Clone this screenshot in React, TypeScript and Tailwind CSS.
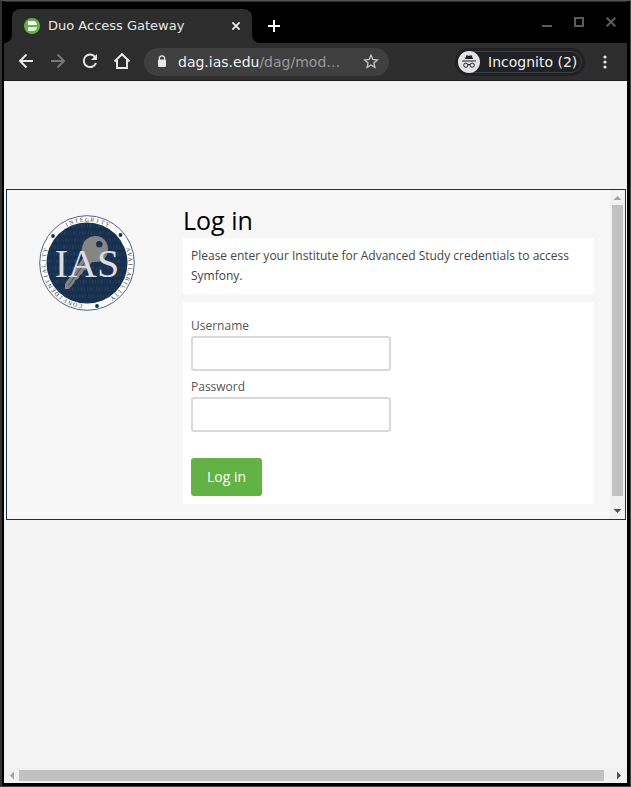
import type { ReactNode } from "react";

function ToolButton({ label, children, className = "" }: { label: string; children: ReactNode; className?: string }) {
  return (
    <button type="button" aria-label={label} className={`flex h-6 w-6 shrink-0 items-center justify-center ${className}`}>
      {children}
    </button>
  );
}

function DuoIcon() {
  return (
    <svg width="16" height="16" viewBox="0 0 16 16" className="shrink-0" aria-hidden="true">
      <circle cx="8" cy="8" r="8" fill="#63b245" />
      <path d="M4 3h5c2.300 0 3.800 1.500 4.100 4H4z" fill="#fff" />
      <path d="M4 9h9.100c-.3 2.500-1.800 4-4.100 4H4z" fill="#e2f1dc" />
    </svg>
  );
}

function TitleBar() {
  return (
    <header className="flex h-[41px] shrink-0 items-start bg-black pt-[7px] text-white">
      <div className="relative ml-2 flex h-[34px] w-[240px] shrink-0 items-center rounded-t-lg bg-[#2d2d2d] pr-1 pl-3">
        <svg className="absolute bottom-0 -left-2" width="8" height="8" viewBox="0 0 8 8" aria-hidden="true">
          <path d="M8 0v8H0a8 8 0 0 0 8-8z" fill="#2d2d2d" />
        </svg>
        <svg className="absolute -right-2 bottom-0" width="8" height="8" viewBox="0 0 8 8" aria-hidden="true">
          <path d="M0 0v8h8a8 8 0 0 1-8-8z" fill="#2d2d2d" />
        </svg>
        <DuoIcon />
        <span className="ml-2 flex-1 truncate text-[13px] leading-4 text-[#e8e8e8]">Duo Access Gateway</span>
        <ToolButton label="Close tab">
          <svg width="8" height="8" viewBox="0 0 8 8" stroke="#f1f1f1" strokeWidth="1.700" aria-hidden="true">
            <path d="M.4.4l7.200 7.200M7.600.4L.4 7.600" />
          </svg>
        </ToolButton>
      </div>
      <ToolButton label="New tab" className="mt-[5px] ml-[10px]">
        <svg width="12" height="12" viewBox="0 0 12 12" stroke="#fff" strokeWidth="2" aria-hidden="true">
          <path d="M6 0v12M0 6h12" />
        </svg>
      </ToolButton>
      <div className="mt-[1px] mr-1 ml-auto flex gap-2 text-[#5c5c5c]">
        <ToolButton label="Minimize">
          <svg width="10" height="10" viewBox="0 0 10 10" aria-hidden="true">
            <path d="M0 8h10v2H0z" fill="currentColor" />
          </svg>
        </ToolButton>
        <ToolButton label="Maximize">
          <svg width="10" height="10" viewBox="0 0 10 10" fill="none" stroke="currentColor" strokeWidth="2" aria-hidden="true">
            <path d="M1 1h8v8H1z" />
          </svg>
        </ToolButton>
        <ToolButton label="Close window">
          <svg width="10" height="10" viewBox="0 0 10 10" stroke="currentColor" strokeWidth="2" aria-hidden="true">
            <path d="M.7.7l8.600 8.600M9.300.7L.7 9.300" />
          </svg>
        </ToolButton>
      </div>
    </header>
  );
}

function Toolbar() {
  return (
    <nav className="flex h-[38px] shrink-0 items-center border-b border-[#221f1f] bg-[#2d2d2d] pl-[10px] text-[#e8e8e8]">
      <div className="flex gap-2">
        <ToolButton label="Back">
          <svg width="24" height="24" viewBox="0 0 24 24" fill="none" stroke="currentColor" strokeWidth="2" aria-hidden="true">
            <path d="M19 11H6M12.500 4.500L6 11l6.500 6.500" />
          </svg>
        </ToolButton>
        <ToolButton label="Forward" className="text-[#777]">
          <svg width="24" height="24" viewBox="0 0 24 24" fill="none" stroke="currentColor" strokeWidth="2" aria-hidden="true">
            <path d="M5 11h13M11.500 4.500L18 11l-6.500 6.500" />
          </svg>
        </ToolButton>
        <ToolButton label="Reload">
          <svg width="24" height="24" viewBox="0 0 24 24" fill="none" aria-hidden="true">
            <path d="M17.300 7.200A6.300 6.300 0 1 0 18 13" stroke="currentColor" strokeWidth="2" />
            <path d="M19 4v6h-6z" fill="currentColor" />
          </svg>
        </ToolButton>
        <ToolButton label="Home">
          <svg width="24" height="24" viewBox="0 0 24 24" fill="none" stroke="currentColor" strokeWidth="2" aria-hidden="true">
            <path d="M4.500 11.500L12 4.200l7.500 7.300M7 10v8h10v-8" />
          </svg>
        </ToolButton>
      </div>
      <div className="ml-[10px] flex h-7 max-w-[245px] flex-1 items-center rounded-full bg-[#3f3f3f] pr-[6px] pl-[13px]">
        <svg width="10" height="14" viewBox="0 0 10 14" className="shrink-0" aria-hidden="true">
          <path d="M2.400 5V3.200a2.600 2.400 0 0 1 5.200 0V5" fill="none" stroke="#e8e8e8" strokeWidth="1.300" />
          <rect x="1" y="4.500" width="8" height="7.500" rx="1" fill="#e8e8e8" />
        </svg>
        <span className="ml-[11px] flex-1 truncate text-[14px] leading-5 text-[#9a9a9a]">
          <span className="text-[#f1f1f1]">dag.ias.edu</span>/dag/mod…
        </span>
        <ToolButton label="Bookmark this page">
          <svg width="16" height="16" viewBox="0 0 16 16" fill="none" stroke="#c8c8c8" strokeWidth="1.300" aria-hidden="true">
            <path d="M8 1.200l1.800 4.300 4.500.4-3.400 3 1 4.500L8 11l-3.900 2.400 1-4.500-3.400-3 4.500-.4z" />
          </svg>
        </ToolButton>
      </div>
      <div className="mr-2 ml-auto flex h-7 w-[130px] shrink-0 items-center rounded-full bg-[#202124] p-[3px]">
        <div className="flex h-[22px] flex-1 items-center rounded-full border border-[#3c4043]">
          <svg width="22" height="22" viewBox="0 0 22 22" className="-ml-px shrink-0" aria-hidden="true">
            <circle cx="11" cy="11" r="11" fill="#e3e3e3" />
            <path d="M7 8l1.300-3.800 2.700.6 2.700-.6L15 8zM4 9.500h14v1.100H4z" fill="#202124" />
            <g fill="none" stroke="#202124" strokeWidth="1">
              <circle cx="7.800" cy="14.200" r="2.100" />
              <circle cx="14.200" cy="14.200" r="2.100" />
              <path d="M9.800 13.800q1.200-.7 2.400 0" />
            </g>
          </svg>
          <span className="ml-2 text-[14px] leading-5 whitespace-nowrap text-[#f1f1f1]">Incognito (2)</span>
        </div>
      </div>
      <ToolButton label="Menu" className="mr-[10px]">
        <svg width="4" height="14" viewBox="0 0 4 14" fill="#e8e8e8" aria-hidden="true">
          <circle cx="2" cy="2" r="1.600" />
          <circle cx="2" cy="7" r="1.600" />
          <circle cx="2" cy="12" r="1.600" />
        </svg>
      </ToolButton>
    </nav>
  );
}

const mottoes = [
  { word: "INTEGRITY", turn: 0, step: 7 },
  { word: "AVAILABILITY", turn: 108, step: 6.5 },
  { word: "CONFIDENTIALITY", turn: 238, step: 7 },
];

function Seal() {
  const rows = Array.from({ length: 12 }, (_, i) => i);
  return (
    <svg width="96" height="96" viewBox="0 0 96 96" role="img" aria-label="IAS seal" fontFamily="'Liberation Serif', serif">
      <defs>
        <clipPath id="disc">
          <circle cx="48" cy="48" r="40" />
        </clipPath>
      </defs>
      <circle cx="48" cy="48" r="47.300" fill="#fff" stroke="#4d6480" strokeWidth="1" />
      <circle cx="48" cy="48" r="40.500" fill="#17304f" />
      <g clipPath="url(#disc)" stroke="#253d5b" strokeWidth="3.500" strokeDasharray="1 1.500 2 1.300 1 2">
        {rows.map((row) => (
          <path key={row} d={`M${4 + (row % 3)} ${11 + row * 7}h88`} />
        ))}
      </g>
      <path
        fill="#858585"
        fillRule="evenodd"
        d="M43 33C44 25 50 21 57 21C64 21 69 27 69 34C69 42 64 47 57 47L53 47L47 55L45 55L43 59L41 60L39 64L36 65L35 68L30 74L26 74L26 69L44 43C43 40 42 37 43 33zM60.300 26a3.200 3.200 0 1 0 0 6.400a3.200 3.200 0 1 0 0-6.400z"
      />
      <path d="M29 71l18-25" stroke="#4e596a" strokeWidth="1.200" />
      <text x="48" y="62" fontSize="40" textAnchor="middle" fill="#dadde1">IAS</text>
      <g fill="#17304f">
        <circle cx="14" cy="21" r="1.900" />
        <circle cx="81.500" cy="20" r="1.900" />
        <circle cx="58" cy="91" r="1.900" />
      </g>
      <g fontSize="6" fill="#2f3a48" textAnchor="middle">
        {mottoes.map(({ word, turn, step }) =>
          word.split("").map((letter, i) => (
            <text key={`${word}-${i}`} x="48" y="6.500" transform={`rotate(${turn + (i - (word.length - 1) / 2) * step} 48 48)`}>
              {letter}
            </text>
          )),
        )}
      </g>
    </svg>
  );
}

function Arrow({ turn }: { turn: string }) {
  return (
    <svg width="15" height="15" viewBox="0 0 15 15" className={`shrink-0 ${turn}`} aria-hidden="true">
      <path d="M3.500 10L7.500 6l4 4z" fill="currentColor" />
    </svg>
  );
}

function Field({ id, label, type }: { id: string; label: string; type: string }) {
  return (
    <div>
      <label htmlFor={id} className="block text-[12px] leading-5 text-[#555]">
        {label}
      </label>
      <input id={id} type={type} className="block h-[35px] w-full max-w-[200px] rounded-[3px] border-2 border-[#d9d9d9] bg-white px-2 outline-none" />
    </div>
  );
}

function LoginFrame() {
  return (
    <section className="flex border border-[#17304a] bg-[#f7f7f7] font-['Open_Sans',sans-serif]">
      <div className="flex min-w-0 flex-1 items-start pr-4 pb-[15px]">
        <div className="flex w-[176px] shrink-0 pt-[25px] pl-8">
          <Seal />
        </div>
        <div className="min-w-0 flex-1 pt-3">
          <h1 className="text-[25px] leading-9 text-black">Log in</h1>
          <p className="bg-white p-2 text-[12px] leading-5 text-[#444]">
            Please enter your Institute for Advanced Study credentials to access Symfony.
          </p>
          <form className="mt-2 flex flex-col gap-[6px] bg-white px-2 pt-[14px] pb-2" onSubmit={(e) => e.preventDefault()}>
            <Field id="username" label="Username" type="text" />
            <Field id="password" label="Password" type="password" />
            <button type="submit" className="mt-5 self-start rounded-[3px] bg-[#63b245] px-4 py-[9px] text-[14px] leading-5 text-white">
              Log in
            </button>
          </form>
        </div>
      </div>
      <div className="flex w-[15px] shrink-0 flex-col bg-[#f1f1f1]">
        <Arrow turn="text-[#a3a3a3]" />
        <div className="mx-[2px] mb-2 flex-1 bg-[#c1c1c1]" />
        <Arrow turn="rotate-180 text-[#505050]" />
      </div>
    </section>
  );
}

export default function App() {
  return (
    <div className="flex min-h-screen flex-col border-t border-r border-b border-l-2 border-t-[#555] border-r-[#444] border-b-[#444] border-l-[#333] bg-black pr-[3px] pb-[3px] pl-[2px] font-['DejaVu_Sans',sans-serif]">
      <div className="h-px shrink-0 bg-[#2c2c2c]" />
      <TitleBar />
      <Toolbar />
      <main className="flex flex-1 flex-col bg-[#f3f3f3]">
        <div className="flex-1 pt-[108px] pr-px pl-[2px]">
          <LoginFrame />
        </div>
        <div className="flex h-[15px] shrink-0 bg-[#f1f1f1]">
          <Arrow turn="-rotate-90 text-[#a3a3a3]" />
          <div className="my-[2px] mr-2 flex-1 bg-[#c1c1c1]" />
          <Arrow turn="rotate-90 text-[#505050]" />
        </div>
      </main>
    </div>
  );
}
